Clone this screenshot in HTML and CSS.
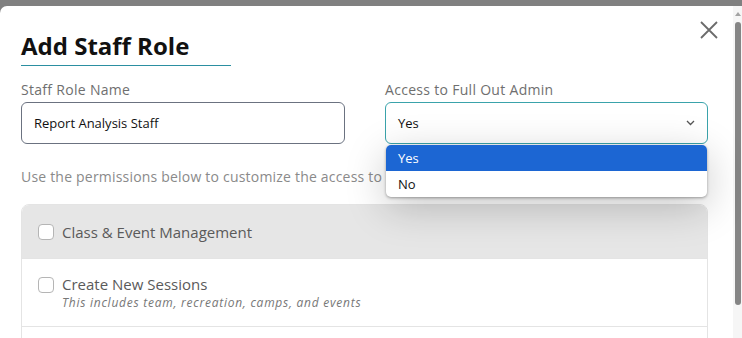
FILE: index.html
```html
<!DOCTYPE html>
<html lang="en">
<head>
    <meta charset="UTF-8">
    <meta name="viewport" content="width=device-width, initial-scale=1.0">
    <title>Add Staff Role</title>
    <link rel="stylesheet" href="styles.css">
</head>
<body>

    <div class="modal">
        <div class="modal-body">
            <button class="close" aria-label="Close">
                <svg width="18" height="18" viewBox="0 0 18 18">
                    <path d="M1 1 L17 17 M17 1 L1 17" stroke="#6b6b6b" stroke-width="1.8" fill="none"/>
                </svg>
            </button>

            <h1 class="title">Add Staff Role</h1>

            <div class="fields">
                <div class="field">
                    <label>Staff Role Name</label>
                    <div class="input">Report Analysis Staff</div>
                </div>
                <div class="field">
                    <label>Access to Full Out Admin</label>
                    <div class="input select">
                        <span>Yes</span>
                        <svg width="9" height="6" viewBox="0 0 9 6">
                            <path d="M1 1 L4.5 4.5 L8 1" stroke="#555" stroke-width="1.3" fill="none"/>
                        </svg>
                    </div>
                    <ul class="options">
                        <li class="active">Yes</li>
                        <li>No</li>
                    </ul>
                </div>
            </div>

            <p class="hint">Use the permissions below to customize the access to Full Out.</p>

            <div class="perms">
                <div class="perm perm-head">
                    <span class="check"></span>
                    <span>Class &amp; Event Management</span>
                </div>
                <div class="perm">
                    <span class="check"></span>
                    <div>
                        <div class="perm-name">Create New Sessions</div>
                        <div class="perm-sub">This includes team, recreation, camps, and events</div>
                    </div>
                </div>
                <div class="perm"></div>
            </div>
        </div>

        <div class="scrollbar">
            <span class="arrow"></span>
            <span class="thumb"></span>
        </div>
    </div>

</body>
</html>
```

FILE: styles.css
```css
body {
    margin: 0;
    background-color: #808080;
    font-family: "Open Sans", "Noto Sans", sans-serif;
    overflow: hidden;
}
.modal {
    margin-top: 6px;
    height: 332px;
    display: flex;
    background-color: #fff;
    border-top-left-radius: 7px;
    overflow: hidden;
}
.modal-body {
    flex: 1;
    position: relative;
    padding: 0 25px 0 21px;
}
.close {
    position: absolute;
    top: 15px;
    right: 15px;
    width: 18px;
    height: 18px;
    padding: 0;
    border: none;
    background: none;
    cursor: pointer;
}
.close svg {
    display: block;
}
.title {
    display: inline-block;
    width: 210px;
    margin: 24px 0 0;
    padding-bottom: 3px;
    border-bottom: 1px solid #2b8fa1;
    font-size: 24px;
    line-height: 32px;
    font-weight: 700;
    color: #111;
}
.fields {
    display: grid;
    grid-template-columns: 324px 323px;
    column-gap: 40px;
    margin-top: 14px;
}
.field {
    position: relative;
}
.field label {
    display: block;
    margin-bottom: 2px;
    font-size: 14px;
    line-height: 20px;
    letter-spacing: 0.3px;
    color: #6f6f6f;
}
.input {
    box-sizing: border-box;
    height: 42px;
    display: flex;
    align-items: center;
    justify-content: space-between;
    padding: 0 12px;
    border: 1px solid #6b7280;
    border-radius: 6px;
    font-size: 13px;
    color: #111;
}
.select {
    border-color: #3aa3ab;
}
.options {
    position: absolute;
    top: 65px;
    left: 1px;
    width: 321px;
    margin: 0;
    padding: 0;
    list-style: none;
    background-color: #fff;
    border-radius: 5px;
    overflow: hidden;
    box-shadow: 0 1px 3px rgba(0, 0, 0, 0.35), 0 10px 40px rgba(0, 0, 0, 0.22);
    z-index: 2;
}
.options li {
    height: 26px;
    line-height: 26px;
    padding-left: 12px;
    font-size: 13px;
    color: #111;
}
.options li.active {
    background-color: #1c66d3;
    color: #fff;
}
.hint {
    margin: 23px 0 17px;
    font-size: 14px;
    line-height: 20px;
    letter-spacing: 0.2px;
    color: #8a8a8a;
    white-space: nowrap;
}
.perms {
    border: 1px solid #e4e4e4;
    border-radius: 8px 8px 0 0;
}
.perm {
    display: flex;
    align-items: flex-start;
    padding: 16px 16px 0;
    height: 68px;
    box-sizing: border-box;
    border-top: 1px solid #e4e4e4;
    color: #5a5a5a;
}
.perm-head {
    height: 53px;
    padding-top: 0;
    align-items: center;
    border-top: none;
    border-radius: 7px 7px 0 0;
    background-color: #e6e6e6;
    font-size: 15px;
}
.check {
    flex: none;
    width: 14px;
    height: 14px;
    margin: 2px 8px 0 0;
    border: 1px solid #b5b5b5;
    border-radius: 4px;
    background-color: #fff;
}
.perm-head .check {
    margin-top: 0;
}
.perm-name {
    font-size: 15px;
    line-height: 18px;
}
.perm-sub {
    margin-top: 2px;
    font-size: 12px;
    line-height: 16px;
    font-style: italic;
    letter-spacing: 0.75px;
    color: #777;
}
.scrollbar {
    position: relative;
    width: 9px;
    background-color: #f6f6f6;
}
.arrow {
    position: absolute;
    top: 6px;
    left: 2px;
    border-left: 3px solid transparent;
    border-right: 3px solid transparent;
    border-bottom: 4px solid #a3a3a3;
}
.thumb {
    position: absolute;
    top: 16px;
    left: 2px;
    width: 6px;
    height: 283px;
    border-radius: 3px;
    background-color: #858585;
}
```
